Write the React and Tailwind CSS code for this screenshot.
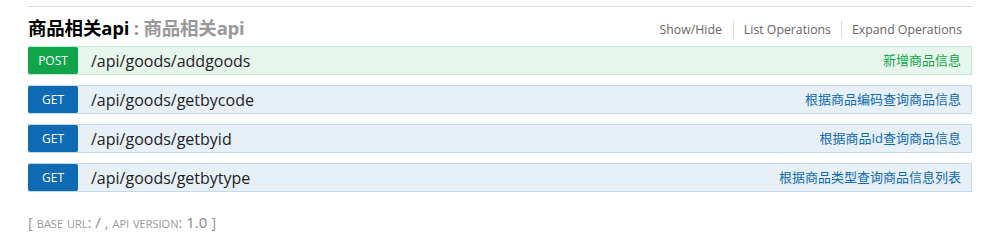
import React from 'react';

const operations = [
  { method: 'POST', path: '/api/goods/addgoods', summary: '新增商品信息' },
  { method: 'GET', path: '/api/goods/getbycode', summary: '根据商品编码查询商品信息' },
  { method: 'GET', path: '/api/goods/getbyid', summary: '根据商品Id查询商品信息' },
  { method: 'GET', path: '/api/goods/getbytype', summary: '根据商品类型查询商品信息列表' },
];

const font = { fontFamily: '"Open Sans", "Noto Sans", "Noto Sans CJK SC", sans-serif' };

function Operation({ method, path, summary }) {
  const isPost = method === 'POST';
  return (
    <div
      className={`flex items-stretch h-[29px] border ${
        isPost ? 'bg-[#e7f6ec] border-[#c3e8d1]' : 'bg-[#e7f0f7] border-[#c3d9ec]'
      }`}
    >
      <div
        className={`w-[50px] -ml-px flex items-center justify-center rounded-[2px] text-[12px] text-white ${
          isPost ? 'bg-[#10a54a]' : 'bg-[#0f6ab4]'
        }`}
      >
        {method}
      </div>
      <div className="flex-1 flex items-center pl-[13px] text-[16px] text-[#222]">{path}</div>
      <div
        className={`flex items-center pr-[10px] text-[13px] ${
          isPost ? 'text-[#10a54a]' : 'text-[#0f6ab4]'
        }`}
      >
        {summary}
      </div>
    </div>
  );
}

export default function App() {
  return (
    <div className="w-[1000px] h-[250px] bg-white" style={font}>
      <div className="mx-[28px] pt-[6px]">
        <div className="border-t border-[#ddd]" />

        {/* Resource heading */}
        <div className="flex items-center justify-between h-[39px] pt-[2px]">
          <h2 className="text-[18.5px] font-bold text-[#000] tracking-[-0.2px]">
            商品相关api
            <span className="text-[#999]"> : 商品相关api</span>
          </h2>
          <ul className="flex items-center text-[12.3px] leading-[18px] text-[#666] pr-[10px] pt-[4px]">
            <li className="pr-[11px]">Show/Hide</li>
            <li className="px-[10px] border-l border-[#ddd]">List Operations</li>
            <li className="pl-[10px] border-l border-[#ddd]">Expand Operations</li>
          </ul>
        </div>

        {/* Operations */}
        <div className="flex flex-col gap-[10px]">
          {operations.map((op) => (
            <Operation key={op.path} {...op} />
          ))}
        </div>

        {/* Footer */}
        <div className="mt-[19px] text-[#999] text-[15px] [font-variant:small-caps]">
          [ base url: <span className="text-[#888]">/</span> , api version:{' '}
          <span className="text-[#888]">1.0</span> ]
        </div>
      </div>
    </div>
  );
}
